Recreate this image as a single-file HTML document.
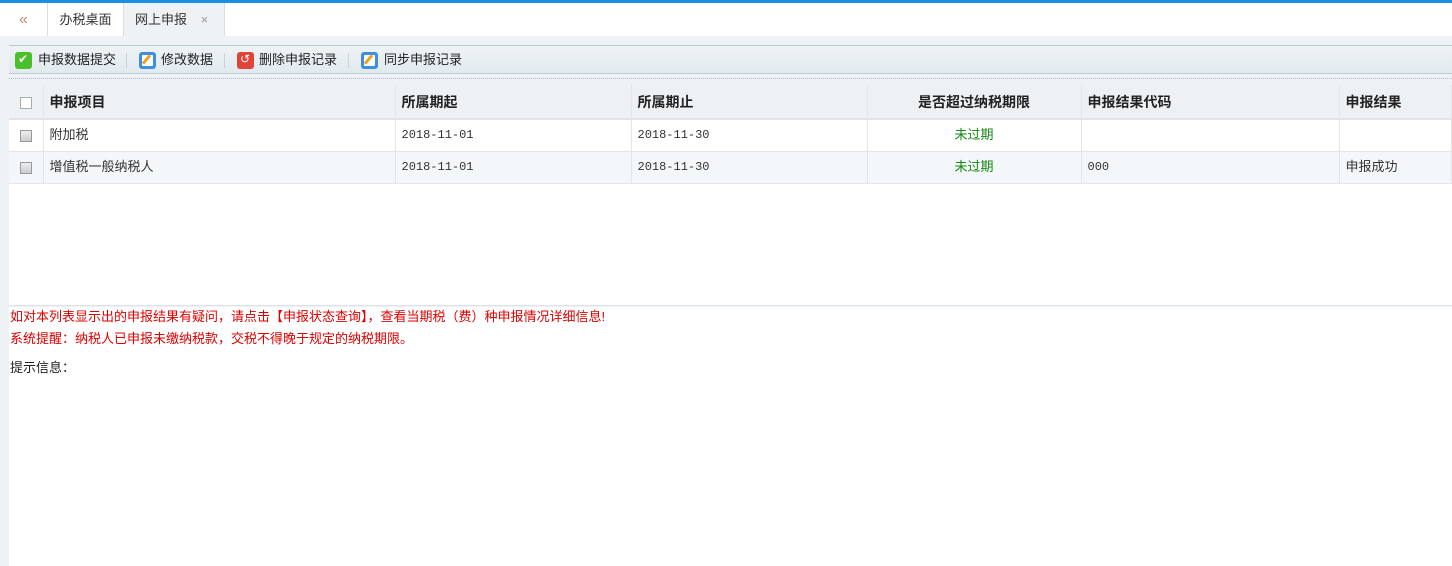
<!DOCTYPE html>
<html><head><meta charset="utf-8"><style>
*{margin:0;padding:0;box-sizing:border-box}
body{width:1452px;height:566px;overflow:hidden;background:#fff;font-family:"Liberation Sans","Noto Sans CJK SC",sans-serif;font-size:12px;color:#333;position:relative}
.topbar{position:absolute;left:0;top:0;width:1452px;height:3px;background:#1b8ee6}
.tabs{position:absolute;left:0;top:3px;width:1452px;height:33px;background:#fff}
.tab{position:absolute;top:0;height:33px;line-height:33px;font-size:13px;color:#333}
.main{position:absolute;left:9px;top:36px;right:0;bottom:0;background:#eef2f5}
.leftstrip{position:absolute;left:0;top:36px;width:9px;bottom:0;background:#eef2f5}
.toolbar{position:absolute;left:9px;top:45px;right:0;height:29px;background:linear-gradient(#eef3f5,#e2eaee);border-top:1px solid #b9cbd5;border-bottom:1px solid #b9cbd5}
.tb{position:absolute;top:5px;height:18px;line-height:18px;font-size:13px;color:#222}
.ic{position:absolute;top:6px;width:17px;height:17px;border-radius:3px}
.sep{position:absolute;top:7px;width:1px;height:15px;background:#c8d3da}
.dots{position:absolute;left:9px;right:0;top:78px;border-top:1px dotted #a9bfcc}
.grid{position:absolute;left:9px;right:0;top:85px;height:221px;background:#fff;border-bottom:1px solid #dde3e8}
table{border-collapse:collapse;position:absolute;left:0;top:0;width:1443px}
td,th{height:32px;border-right:1px solid #e3e6e9;border-bottom:1px solid #e3e6e9;text-align:left;padding-left:6px;font-size:13px;white-space:nowrap;vertical-align:middle;line-height:16px}
th{height:34px;background:#edf1f4;font-weight:bold;font-size:14px;color:#222;border-bottom:2px solid #e0e4e8}
tr.alt td{background:#f4f7f9}
.mono{font-family:"Liberation Mono",monospace;font-size:12px}
.cb{display:inline-block;width:12px;height:12px;border:1px solid #999;background:linear-gradient(#eee,#ccc);vertical-align:middle}
.g{color:#118811;text-align:center;padding-left:0}
.notes{position:absolute;left:10px;top:308px;font-size:13px}
.red{color:#e00000}
</style></head><body>
<div class="topbar"></div>
<div class="tabs">
 <div class="tab" style="left:0;width:48px;border-right:1px solid #ddd;text-align:center;color:#c98b6a;font-size:16px">«</div>
 <div class="tab" style="left:48px;width:76px;border-right:1px solid #ddd;text-align:center">办税桌面</div>
 <div class="tab" style="left:124px;width:101px;background:#eef2f5;border-right:1px solid #ddd;padding-left:11px">网上申报 <span style="color:#999;margin-left:10px">×</span></div>
</div>
<div class="leftstrip"></div>
<div class="main"></div>
<div class="toolbar">
 <div class="ic" style="left:6px;background:#4bbf2a"><span style="color:#fff;font-size:12px;position:absolute;left:3px;top:0">✔</span></div>
 <div class="tb" style="left:29px">申报数据提交</div>
 <div class="sep" style="left:117px"></div>
 <div class="ic" style="left:130px;background:#3f8fe0"><span style="position:absolute;left:3px;top:3px;width:11px;height:11px;background:#fff;border-radius:1px"></span><span style="position:absolute;left:6px;top:2px;width:3px;height:11px;background:#f0a020;transform:rotate(40deg)"></span></div>
 <div class="tb" style="left:152px">修改数据</div>
 <div class="sep" style="left:215px"></div>
 <div class="ic" style="left:228px;background:#e04438"><span style="color:#fff;font-size:12px;position:absolute;left:3px;top:0">↺</span></div>
 <div class="tb" style="left:250px">删除申报记录</div>
 <div class="sep" style="left:339px"></div>
 <div class="ic" style="left:352px;background:#3f8fe0"><span style="position:absolute;left:3px;top:3px;width:11px;height:11px;background:#fff;border-radius:1px"></span><span style="position:absolute;left:6px;top:2px;width:3px;height:11px;background:#f0a020;transform:rotate(40deg)"></span></div>
 <div class="tb" style="left:375px">同步申报记录</div>
</div>
<div class="dots"></div>
<div class="grid">
<table>
<tr><th style="width:34px;text-align:center;padding:0"><span class="cb" style="background:#fff;border-color:#aaa"></span></th><th style="width:352px">申报项目</th><th style="width:236px">所属期起</th><th style="width:236px">所属期止</th><th style="width:214px;text-align:center;padding:0">是否超过纳税期限</th><th style="width:258px">申报结果代码</th><th>申报结果</th></tr>
<tr><td style="text-align:center;padding:0"><span class="cb"></span></td><td>附加税</td><td class="mono">2018-11-01</td><td class="mono">2018-11-30</td><td class="g">未过期</td><td></td><td></td></tr>
<tr class="alt"><td style="text-align:center;padding:0"><span class="cb"></span></td><td>增值税一般纳税人</td><td class="mono">2018-11-01</td><td class="mono">2018-11-30</td><td class="g">未过期</td><td class="mono">000</td><td>申报成功</td></tr>
</table>
</div>
<div style="position:absolute;left:9px;right:0;top:307px;bottom:0;background:#fff"></div>
<div class="notes">
<div class="red" style="height:22px;line-height:17px">如对本列表显示出的申报结果有疑问，请点击【申报状态查询】，查看当期税（费）种申报情况详细信息!</div>
<div class="red" style="height:27px;line-height:17px">系统提醒：纳税人已申报未缴纳税款，交税不得晚于规定的纳税期限。</div>
<div style="font-size:13px;color:#222">提示信息：</div>
</div>
</body></html>
